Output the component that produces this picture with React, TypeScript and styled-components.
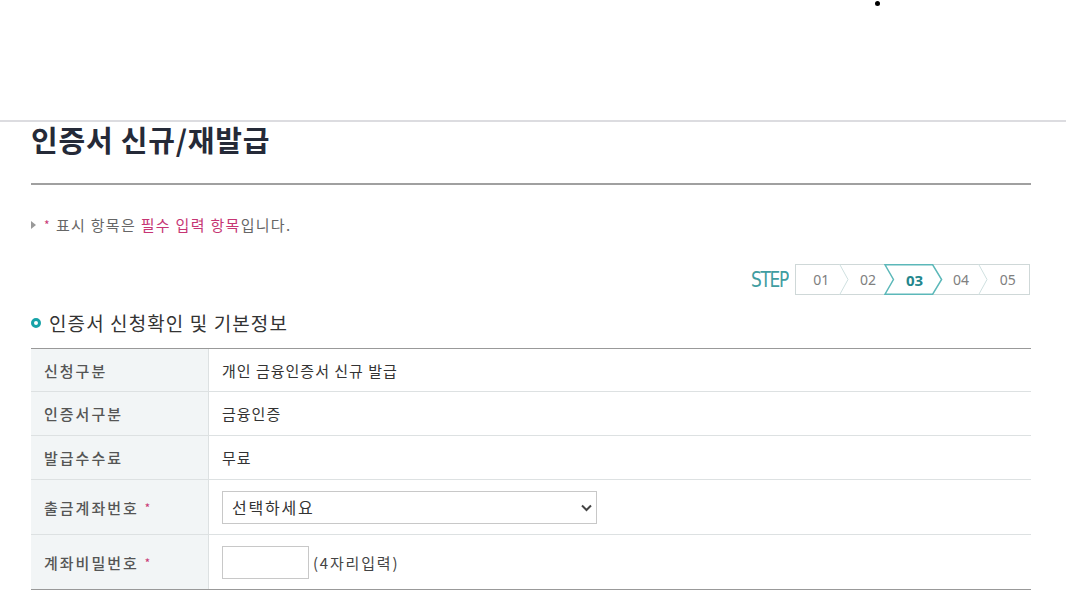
import React from "react";
import styled, { createGlobalStyle } from "styled-components";

const GlobalStyle = createGlobalStyle`
  html, body { margin: 0; padding: 0; background: #fff; }
  body { font-family: "Noto Sans CJK KR", "Noto Sans", sans-serif; color: #333; }
  * { box-sizing: border-box; }
`;

const Header = styled.header`
  position: relative;
  height: 122px;
  border-bottom: 2px solid #dcdce0;
`;

const StrayDot = styled.span`
  position: absolute;
  left: 875px;
  top: 1px;
  width: 5px;
  height: 5px;
  border-radius: 50%;
  background: #000;
`;

const Main = styled.main`
  width: 1000px;
  margin-left: 31px;
`;

const Title = styled.h1`
  margin: 0;
  height: 63px;
  font-size: 29px;
  line-height: 34px;
  font-weight: 700;
  color: #252a38;
  letter-spacing: 0.8px;
  border-bottom: 2px solid #a0a0a0;
`;

const Notice = styled.p`
  margin: 30px 0 0;
  display: flex;
  align-items: center;
  font-size: 15px;
  line-height: 20px;
  color: #666;
  letter-spacing: 1.3px;
`;

const Arrow = styled.span`
  width: 0;
  height: 0;
  border-top: 4px solid transparent;
  border-bottom: 4px solid transparent;
  border-left: 5px solid #999;
  margin-right: 8px;
`;

const Star = styled.span`
  color: #c93a77;
  font-size: 12px;
  margin-right: 5px;
`;

const Pink = styled.span`
  color: #c63574;
`;

const StepRow = styled.div`
  margin-top: 29px;
  display: flex;
  justify-content: flex-end;
  align-items: center;
  padding-right: 1px;
`;

const StepLabel = styled.span`
  font-family: "DejaVu Sans Condensed", "DejaVu Sans", sans-serif;
  font-stretch: condensed;
  font-size: 21px;
  line-height: 24px;
  color: #3f9da1;
  letter-spacing: -1.5px;
  margin-right: 7px;
  display: inline-block;
  transform: scaleX(0.9);
  transform-origin: right center;
`;

const StepBox = styled.ol`
  list-style: none;
  margin: 0;
  padding: 0;
  display: flex;
  width: 235px;
  height: 31px;
  border: 1px solid #cfd8d8;
`;

const Step = styled.li<{ $active?: boolean }>`
  position: relative;
  flex: 1;
  display: flex;
  align-items: center;
  justify-content: center;
  font-family: "Noto Sans", sans-serif;
  font-size: ${(p) => (p.$active ? "15px" : "14px")};
  font-weight: ${(p) => (p.$active ? 700 : 400)};
  color: ${(p) => (p.$active ? "#23868c" : "#808080")};
  padding-left: 4px;
`;

const StepText = styled.span`
  position: relative;
  z-index: 3;
`;

const Separator = styled.svg`
  position: absolute;
  top: -1px;
  right: -6px;
  width: 10px;
  height: 31px;
  z-index: 1;
`;

const ActiveShape = styled.svg`
  position: absolute;
  top: -1px;
  left: -5px;
  width: calc(100% + 12px);
  height: 31px;
  z-index: 2;
`;

const SectionTitle = styled.h2`
  margin: 16px 0 0;
  display: flex;
  align-items: center;
  font-size: 19px;
  line-height: 24px;
  font-weight: 400;
  color: #333;
  letter-spacing: 1.1px;
`;

const Ring = styled.span`
  width: 10px;
  height: 10px;
  border-radius: 50%;
  border: 3px solid #17a3a8;
  margin-right: 8px;
`;

const Table = styled.div`
  margin-top: 13px;
  display: grid;
  grid-template-columns: 178px 1fr;
  border-top: 1px solid #999;
  border-bottom: 1px solid #999;
`;

const Label = styled.div<{ $h: number; $last?: boolean }>`
  display: flex;
  align-items: center;
  height: ${(p) => p.$h}px;
  padding-left: 13px;
  background: #f2f5f6;
  border-right: 1px solid #dde1e2;
  border-bottom: ${(p) => (p.$last ? "none" : "1px solid #dde1e2")};
  font-size: 15px;
  font-weight: 500;
  color: #555;
  letter-spacing: 2px;
`;

const Value = styled.div<{ $h: number; $last?: boolean }>`
  display: flex;
  align-items: center;
  height: ${(p) => p.$h}px;
  padding-left: 13px;
  border-bottom: ${(p) => (p.$last ? "none" : "1px solid #dde1e2")};
  font-size: 15px;
  color: #333;
  letter-spacing: 1px;
`;

const Req = styled.span`
  color: #c93a77;
  font-size: 11px;
  margin-left: 6px;
`;

const SelectWrap = styled.div`
  position: relative;
  width: 375px;
  height: 33px;
`;

const Select = styled.select`
  appearance: none;
  width: 100%;
  height: 100%;
  border: 1px solid #c8c8c8;
  background: #fff;
  padding: 0 0 0 9px;
  font-family: "Noto Sans CJK KR", sans-serif;
  font-size: 16px;
  letter-spacing: 1.8px;
  color: #333;
  border-radius: 0;
  outline: none;
`;

const Chevron = styled.svg`
  position: absolute;
  right: 5px;
  top: 13px;
  width: 11px;
  height: 8px;
  pointer-events: none;
`;

const PwInput = styled.input`
  width: 87px;
  height: 33px;
  border: 1px solid #c8c8c8;
  border-radius: 0;
  padding: 0 6px;
  outline: none;
`;

const Hint = styled.span`
  margin-left: 4px;
  font-size: 15px;
  color: #444;
  letter-spacing: 1.8px;
`;

const steps = ["01", "02", "03", "04", "05"];

export default function App() {
  return (
    <>
      <GlobalStyle />
      <Header>
        <StrayDot />
      </Header>
      <Main>
        <Title>인증서 신규/재발급</Title>
        <Notice>
          <Arrow />
          <Star>*</Star>
          표시 항목은&nbsp;<Pink>필수 입력 항목</Pink>입니다.
        </Notice>
        <StepRow>
          <StepLabel>STEP</StepLabel>
          <StepBox>
            {steps.map((s, i) => {
              const active = s === "03";
              return (
                <Step key={s} $active={active}>
                  {active && (
                    <ActiveShape viewBox="0 0 59 31" preserveAspectRatio="none">
                      <polygon
                        points="1,0.8 49,0.8 58,15.5 49,30.2 1,30.2 9.5,15.5"
                        fill="#fff"
                        stroke="#5cb8b9"
                        strokeWidth="1.5"
                        vectorEffect="non-scaling-stroke"
                      />
                    </ActiveShape>
                  )}
                  {i < steps.length - 1 && !active && (
                    <Separator viewBox="0 0 10 31">
                      <polyline points="0.5,0 9,15.5 0.5,31" fill="none" stroke="#cfe0e0" strokeWidth="1" />
                    </Separator>
                  )}
                  <StepText>{s}</StepText>
                </Step>
              );
            })}
          </StepBox>
        </StepRow>
        <SectionTitle>
          <Ring />
          인증서 신청확인 및 기본정보
        </SectionTitle>
        <Table>
          <Label $h={43}>신청구분</Label>
          <Value $h={43}>개인 금융인증서 신규 발급</Value>
          <Label $h={44}>인증서구분</Label>
          <Value $h={44}>금융인증</Value>
          <Label $h={44}>발급수수료</Label>
          <Value $h={44}>무료</Value>
          <Label $h={55}>
            출금계좌번호<Req>*</Req>
          </Label>
          <Value $h={55}>
            <SelectWrap>
              <Select defaultValue="">
                <option value="">선택하세요</option>
              </Select>
              <Chevron viewBox="0 0 11 8">
                <polyline points="1,1.5 5.5,6 10,1.5" fill="none" stroke="#444" strokeWidth="2" />
              </Chevron>
            </SelectWrap>
          </Value>
          <Label $h={54} $last>
            계좌비밀번호<Req>*</Req>
          </Label>
          <Value $h={54} $last>
            <PwInput type="password" />
            <Hint>(4자리입력)</Hint>
          </Value>
        </Table>
      </Main>
    </>
  );
}
